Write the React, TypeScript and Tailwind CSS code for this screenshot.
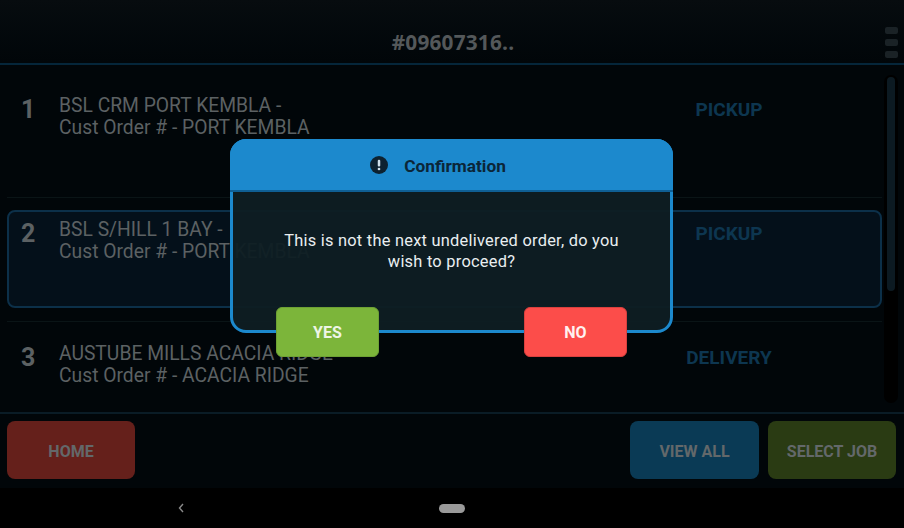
import React from "react";

const rowText = "mt-[1px] text-[19.3px] leading-[22px] text-[#5c6163] font-['Roboto',sans-serif]";

function Row({ n, title, sub, kind, selected }: { n: string; title: string; sub: string; kind: string; selected?: boolean }) {
  return (
    <div className={`flex items-start ${selected ? "h-[98px] rounded-[8px] border-2 border-[#0c3049] bg-[#04101a] pt-[6px]" : "h-full px-[2px]"} `}>
      <div className="w-[50px] pl-[12px] text-[25px] leading-[32px] font-bold text-[#5c6163] font-['Roboto',sans-serif]">{n}</div>
      <div className={`flex-1 whitespace-nowrap ${rowText}`}>
        <div>{title}</div>
        <div>{sub}</div>
      </div>
      <div className="w-[302px] flex justify-center">
        <span className="text-[19px] leading-[22px] mt-[5px] font-bold text-[#0d3650] font-['Roboto',sans-serif]">{kind}</span>
      </div>
    </div>
  );
}

function FooterButton({ label, cls }: { label: string; cls: string }) {
  return (
    <div className={`h-[58px] rounded-[8px] flex items-center justify-center pt-[3px] text-[16px] font-bold text-[#63686a] font-['Roboto',sans-serif] ${cls}`}>
      {label}
    </div>
  );
}

export default function App() {
  return (
    <div className="relative w-[904px] h-[528px] overflow-hidden bg-black flex flex-col font-['Roboto',sans-serif]">
      <div className="h-[65px] shrink-0 relative flex items-center justify-center border-b-2 border-[#05263a] bg-gradient-to-b from-[#070c0f] to-[#010609]">
        <span className="mt-[22px] ml-[2px] text-[20.8px] font-bold text-[#54585a] font-['Open_Sans',sans-serif] tracking-[0.2px]">#09607316..</span>
        <div className="absolute left-[885px] top-[27px] flex flex-col gap-[5px]">
          <div className="w-[13px] h-[7px] rounded-[2px] bg-[#1a2226]" />
          <div className="w-[13px] h-[7px] rounded-[2px] bg-[#1a2226]" />
          <div className="w-[13px] h-[7px] rounded-[2px] bg-[#1a2226]" />
        </div>
      </div>

      <div className="h-[349px] shrink-0 flex bg-[#010609] border-b-2 border-[#0a1c26]">
        <div className="w-[882px] shrink-0 pl-[7px] flex flex-col">
          <div className="h-[133px] pt-[29px] border-b border-[#0a1416] shrink-0">
            <Row n="1" title="BSL CRM PORT KEMBLA -" sub="Cust Order # - PORT KEMBLA" kind="PICKUP" />
          </div>
          <div className="h-[124px] pt-[12px] border-b border-[#0a1416] shrink-0">
            <Row n="2" title="BSL S/HILL 1 BAY -" sub="Cust Order # - PORT KEMBLA" kind="PICKUP" selected />
          </div>
          <div className="pt-[20px]">
            <Row n="3" title="AUSTUBE MILLS ACACIA RIDGE" sub="Cust Order # - ACACIA RIDGE" kind="DELIVERY" />
          </div>
        </div>
        <div className="ml-[2px] mt-[10px] h-[328px] w-[14px] rounded-full bg-black px-[3px] pt-[2px]">
          <div className="w-[8px] h-[214px] rounded-full bg-[#0c1a22]" />
        </div>
      </div>

      <div className="h-[74px] shrink-0 flex items-start justify-between pl-[7px] pr-[8px] pt-[7px] bg-[#010609]">
        <FooterButton label="HOME" cls="w-[128px] bg-[#65201b]" />
        <div className="flex gap-[9px]">
          <FooterButton label="VIEW ALL" cls="w-[129px] bg-[#0a3a55]" />
          <FooterButton label="SELECT JOB" cls="w-[128px] bg-[#2a3b13]" />
        </div>
      </div>

      <div className="flex-1 bg-black relative flex items-center">
        <svg className="absolute left-[176px] top-[13px]" width="10" height="14" viewBox="0 0 10 14" fill="none">
          <path d="M7 3 L3.5 7 L7 11" stroke="#8a8a8a" strokeWidth="1.4" />
        </svg>
        <div className="absolute left-[439px] top-[16px] w-[26px] h-[9px] rounded-full bg-[#9a9a9a]" />
      </div>

      {/* Modal overlay */}
      <div className="absolute left-[230px] top-[139px] w-[443px] h-[194px] rounded-[16px] border-[3px] border-[#1c89cd] bg-[#0e1d23]/95 flex flex-col">
        <div className="h-[53px] -mt-[3px] -mx-[3px] shrink-0 rounded-t-[16px] bg-[#1c89cd] border-b-2 border-[#0f5f94] flex items-center justify-center pr-[27px] pt-[4px] text-[17.3px] font-bold text-[#0b2638]">
          <svg className="mr-[16px] mb-[3px]" width="18" height="18" viewBox="0 0 18 18">
            <circle cx="9" cy="9" r="9" fill="#0d2230" />
            <rect x="7.75" y="3.8" width="2.5" height="6.8" rx="1.1" fill="#cfe0ea" />
            <circle cx="9" cy="13" r="1.35" fill="#cfe0ea" />
          </svg>
          <span>Confirmation</span>
        </div>
        <div className="pt-[38px] px-[50px] text-center text-[16.4px] tracking-[0.25px] leading-[21px] text-[#e9eef0]">
          This is not the next undelivered order, do you wish to proceed?
        </div>
      </div>
      <div className="absolute left-[276px] top-[307px] w-[103px] h-[50px] rounded-[6px] border border-[#6ea134] bg-[#7cb53a] flex items-center justify-center pt-[2px] text-[16px] font-bold text-[#eef5e6]">YES</div>
      <div className="absolute left-[524px] top-[307px] w-[103px] h-[50px] rounded-[6px] border border-[#d9403e] bg-[#fc4d4a] flex items-center justify-center pt-[2px] text-[16px] font-bold text-[#fff1f0]">NO</div>
    </div>
  );
}
